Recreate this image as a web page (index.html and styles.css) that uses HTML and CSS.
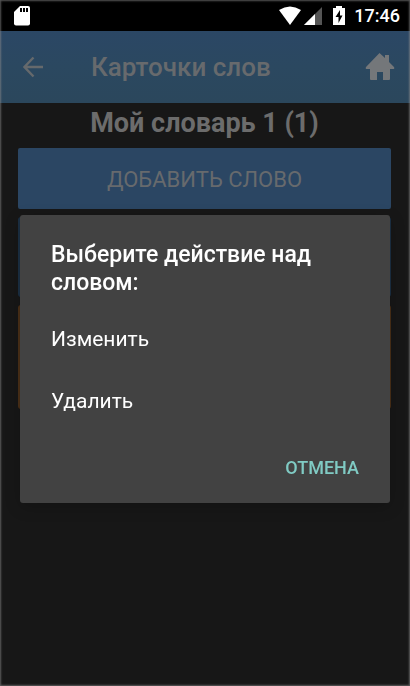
FILE: index.html
```html
<!DOCTYPE html>
<html lang="ru">
<head>
<meta charset="utf-8">
<meta name="viewport" content="width=device-width, initial-scale=1">
<title>Карточки слов</title>
<link rel="stylesheet" href="styles.css">
</head>
<body>
<div class="screen">
  <div class="status">
    <svg class="status-sd" width="16" height="20" viewBox="0 0 16 20" aria-hidden="true"><path fill="#fff" d="M6 0h8a2 2 0 0 1 2 2v15.500a2 2 0 0 1-2 2H2a2 2 0 0 1-2-2V6z"/><path fill="#000" d="M6 2h2v4H6zM9 2h2v4H9zM12 2h2v4h-2z"/></svg>
    <div class="status-right">
      <svg width="24" height="20" viewBox="0 0 24 20" aria-hidden="true"><path fill="#fff" d="M1 4Q12-3 23 4L12 19z"/></svg>
      <svg width="19" height="20" viewBox="0 0 19 20" aria-hidden="true"><path fill="#555" d="M0 19L18 1v18z"/><path fill="#fff" d="M0 19L11 8v11z"/></svg>
      <svg class="status-battery" width="12" height="20" viewBox="0 0 12 20" aria-hidden="true"><path fill="#fff" d="M3 0h6v2h3v17H0V2h3z"/><path fill="#000" d="M7 4L2.500 11H5.500V17L9.500 9.500H7z"/></svg>
      <span class="clock">17:46</span>
    </div>
  </div>
  <header class="toolbar">
    <button class="icon-button" type="button" aria-label="Назад"><svg width="22" height="22" viewBox="0 0 22 22"><path fill="none" stroke="#65696c" stroke-width="2.400" d="M20 11H2M10.500 1.500L1.500 11l9 9.500"/></svg></button>
    <div class="toolbar-title">Карточки слов</div>
    <button class="icon-button" type="button" aria-label="Домой"><svg width="30" height="28" viewBox="0 0 30 28"><path fill="#74777a" d="M14.500 0L20 5V2h4v7l5 5q1 2-1 2h-3v10q0 1-1 1h-6v-8h-6v8H6q-1 0-1-1V16H2q-2 0-1-2z"/></svg></button>
  </header>
  <main class="content">
    <h1 class="heading">Мой словарь 1 (1)</h1>
    <button class="add" type="button">ДОБАВИТЬ СЛОВО</button>
    <div class="card card-word"></div>
    <div class="card card-translation"></div>
  </main>
</div>
<div class="overlay">
  <section class="dialog" role="dialog" aria-modal="true" aria-labelledby="dialog-title">
    <h2 class="dialog-title" id="dialog-title">Выберите действие над словом:</h2>
    <button class="option" type="button">Изменить</button>
    <button class="option" type="button">Удалить</button>
    <div class="actions"><button class="cancel" type="button">ОТМЕНА</button></div>
  </section>
</div>
<div class="bezel"></div>
</body>
</html>
```
FILE: styles.css
```css
* {
  box-sizing: border-box;
}

body {
  margin: 0;
  background: #171717;
  font-family: Roboto, "Liberation Sans", sans-serif;
}

button {
  margin: 0;
  padding: 0;
  border: 0;
  background: none;
  font-family: inherit;
}

svg {
  display: block;
}

.screen {
  min-height: 100vh;
}

.status {
  display: flex;
  align-items: center;
  justify-content: space-between;
  height: 31px;
  padding: 0 10px 0 14px;
  background: #000;
}

.status-right {
  display: flex;
  align-items: center;
  gap: 2px;
}

.status-battery {
  margin: 0 7px 0 8px;
}

.clock {
  color: #fff;
  font-size: 18px;
  font-weight: 500;
  line-height: 20px;
}

.toolbar {
  display: flex;
  align-items: center;
  height: 72px;
  padding: 0 15px 0 23px;
  background: linear-gradient(#2b4765, #2b4860 50%, #2b475c);
}

.toolbar-title {
  flex: 1;
  padding-left: 46px;
  color: #676a6d;
  font-size: 26px;
  font-weight: 500;
}

.content {
  display: flex;
  flex-direction: column;
  padding: 0 19px 0 18px;
}

.heading {
  margin: 0;
  color: #6c6c6c;
  font-size: 27px;
  font-weight: 700;
  line-height: 40px;
  text-align: center;
}

.add {
  height: 61px;
  margin: 5px 0 8px;
  padding-top: 2px;
  border-radius: 2px;
  background: #2b4663;
  color: #676a6d;
  font-size: 22px;
}

.card {
  border-radius: 3px;
}

.card-word {
  height: 80px;
  margin-bottom: 8px;
  background: #1c3044;
}

.card-translation {
  height: 104px;
  background: #4b3018;
}

.overlay {
  position: fixed;
  inset: 31px 0 0;
  display: flex;
  align-items: center;
  padding: 0 20px;
}

.dialog {
  flex: 1;
  padding: 26px 0 8px;
  border-radius: 3px;
  background: #424242;
  box-shadow: 0 4px 16px rgba(0, 0, 0, 0.2);
}

.dialog-title {
  margin: 0 0 11px;
  padding: 0 31px;
  color: #fff;
  font-size: 23px;
  font-weight: 500;
  line-height: 28px;
}

.option {
  display: block;
  width: 100%;
  height: 62px;
  padding: 0 31px;
  color: #fff;
  font-size: 21px;
  text-align: left;
}

.actions {
  display: flex;
  justify-content: flex-end;
  padding: 9px 21px 0 0;
}

.cancel {
  height: 54px;
  padding: 0 10px;
  color: #80cbc4;
  font-size: 18px;
  font-weight: 500;
}

.bezel {
  position: fixed;
  inset: 0;
  box-shadow: inset 0 0 2px 1px rgba(140, 140, 140, 0.6);
  pointer-events: none;
}
```
